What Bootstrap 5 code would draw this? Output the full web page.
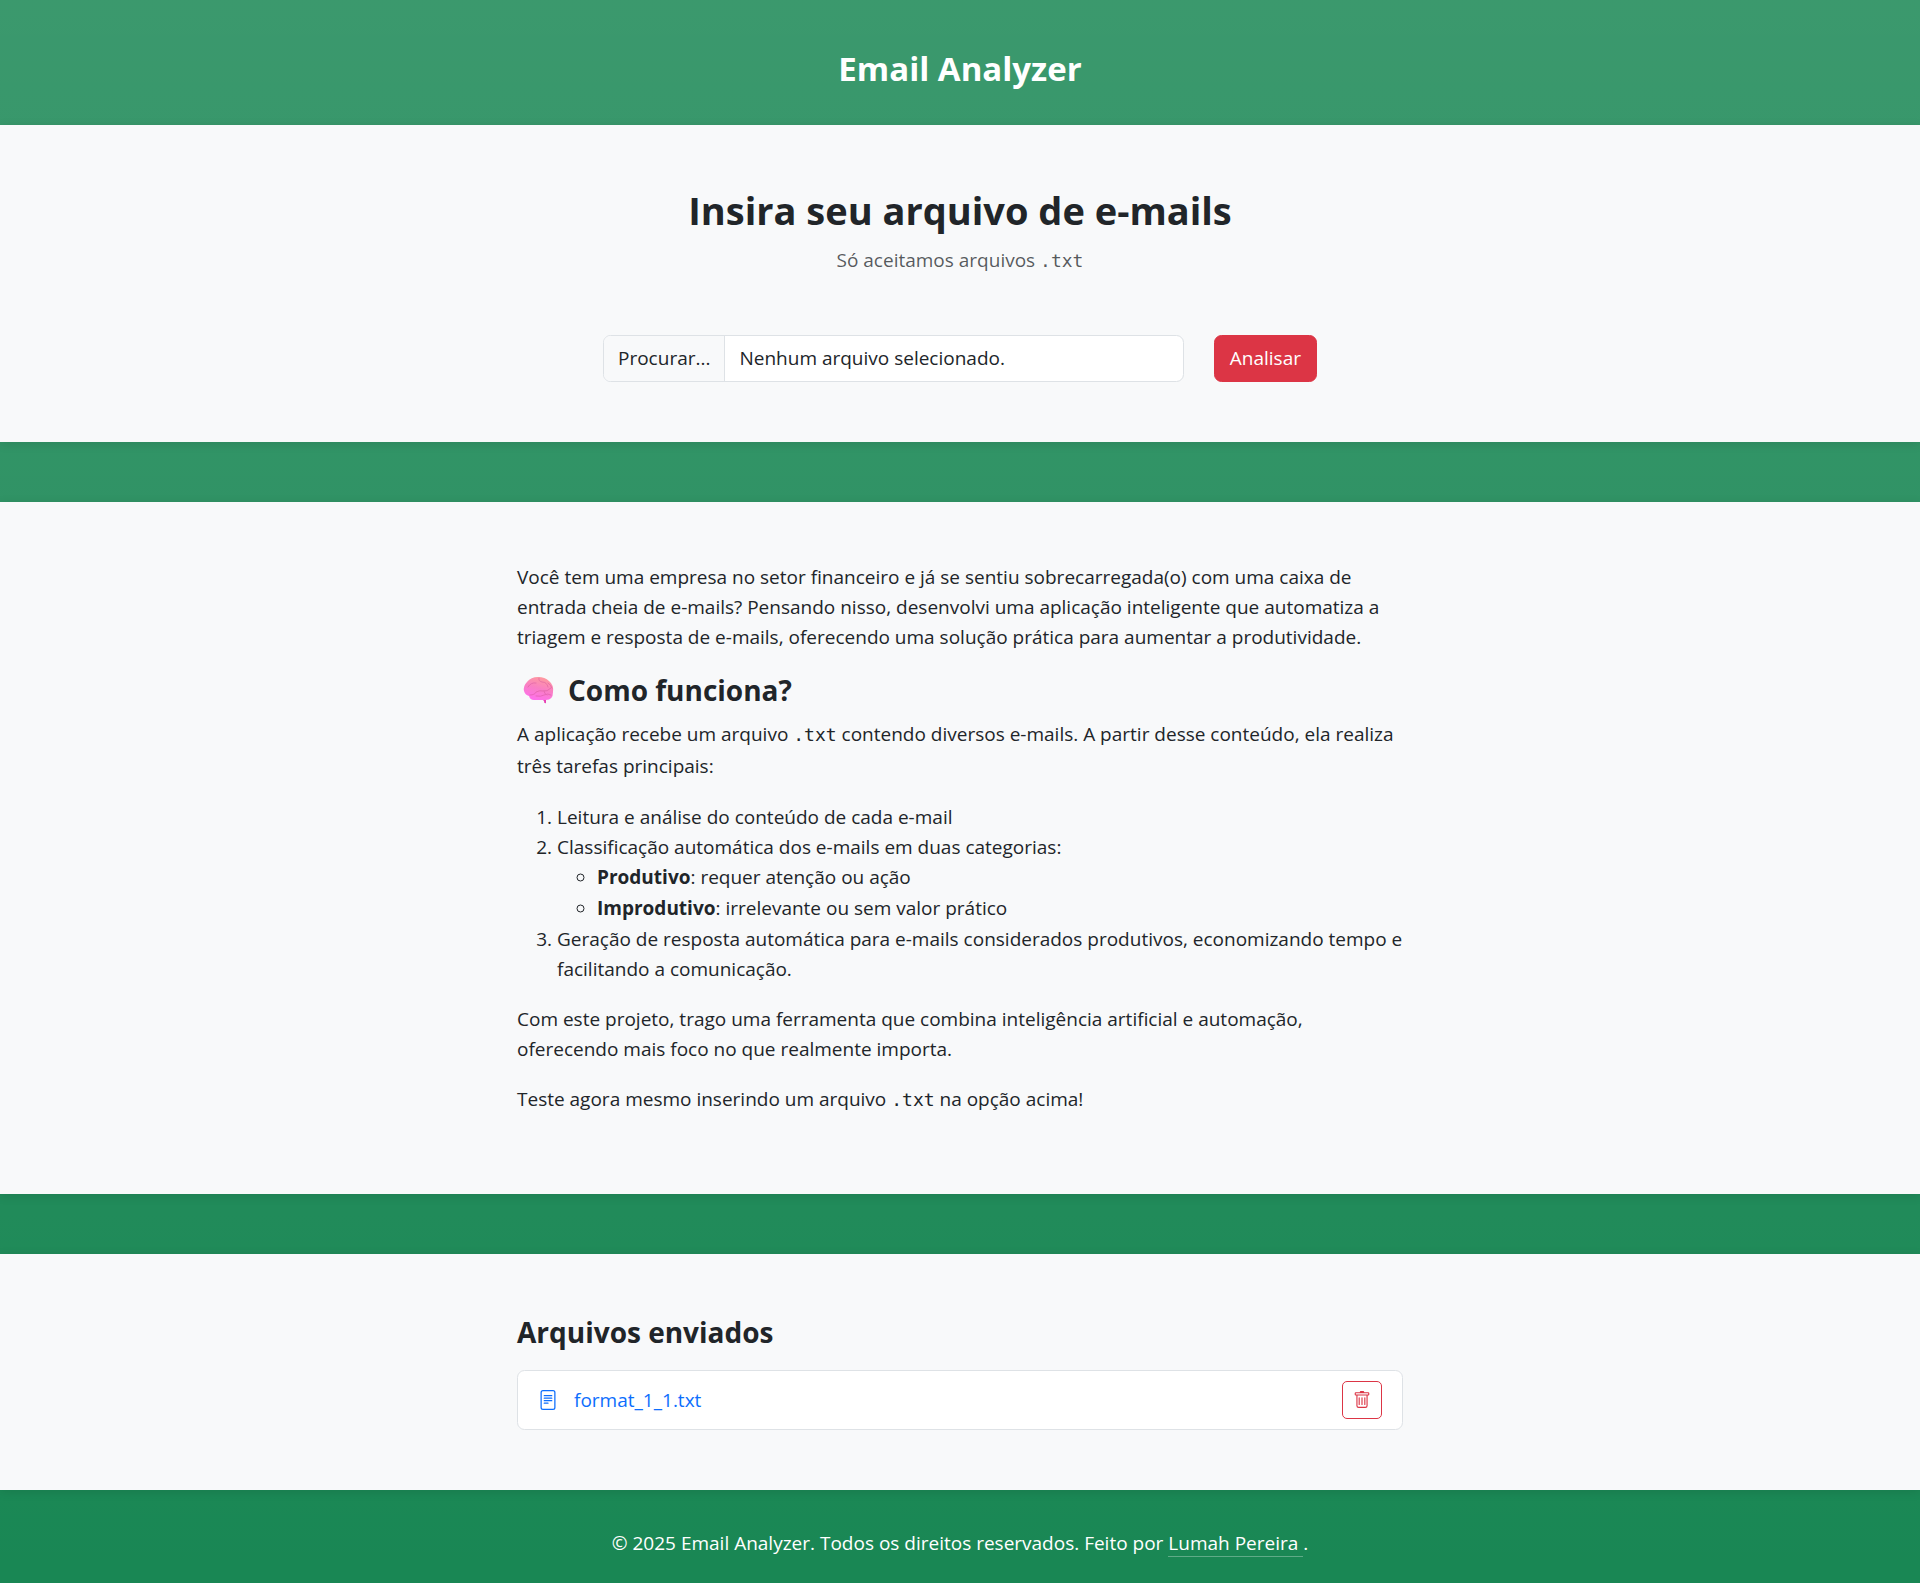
<!DOCTYPE html>
<html lang="pt-BR">
<head>
<meta charset="utf-8">
<meta name="viewport" content="width=device-width, initial-scale=1">
<title>Email Analyzer</title>
<link href="https://cdn.jsdelivr.net/npm/bootstrap@5.3.0/dist/css/bootstrap.min.css" rel="stylesheet">
<style>
  html { font-size: 20px; }
  body { font-family: "Open Sans", "Noto Sans", sans-serif; font-size: 19px; line-height: 30px; }
  h1, h2, h3 { font-weight: 700; line-height: 1.2; }
  code { font-family: "DejaVu Sans Mono", monospace; font-size: 18px; line-height: 1; color: inherit; }
  .site-title { font-size: 33px; line-height: 44px; }
  .site-header { padding: 47px 16px 34px; }
  .site-footer { padding: 38px 16px 25px; }
  .panel { padding: 60px 16px; box-shadow: 0 2px 10px rgba(0, 0, 0, .1); }
  .panel + .panel { margin-top: 60px; }
  .upload-title { font-size: 38px; line-height: 50px; }
  .section-title { font-size: 28px; line-height: 36px; }
  .content-column { max-width: 886px; }
  .upload-form { max-width: 714px; gap: 30px; }
  .upload-form .btn, .file-picker { font-size: 19px; line-height: 31px; }
  .upload-form .btn { padding: 7px 15px; }
  .file-picker { cursor: pointer; }
  .file-picker span { padding: 7px 14px; }
  .file-picker .file-picker-button { border-right: 1px solid #dee2e6; background: #f8f9fa; }
  .line-loose { line-height: 31px; }
  .line-code { line-height: 32px; }
  .file-item { min-height: 60px; }
  .file-item a { gap: 16px; }
  .file-item .btn { width: 40px; height: 38px; border-radius: 5px; }
  .author-link { border-bottom: 1px solid rgba(255, 255, 255, .3); }
</style>
<script src="https://cdn.jsdelivr.net/npm/bootstrap@5.3.0/dist/js/bootstrap.bundle.min.js"></script>
</head>
<body class="bg-success bg-gradient min-vh-100">
<header class="site-header text-center text-white">
  <h1 class="site-title mb-0">Email Analyzer</h1>
</header>

<main>
  <section class="panel bg-light">
    <div class="text-center mb-5">
      <h2 class="upload-title mb-2">Insira seu arquivo de e-mails</h2>
      <p class="text-muted mb-0">Só aceitamos arquivos <code>.txt</code></p>
    </div>
    <form class="upload-form d-flex mx-auto">
      <input class="visually-hidden" type="file" id="arquivo" accept=".txt">
      <label class="file-picker form-control d-flex p-0 overflow-hidden" for="arquivo">
        <span class="file-picker-button">Procurar...</span>
        <span>Nenhum arquivo selecionado.</span>
      </label>
      <button class="btn btn-danger" type="submit">Analisar</button>
    </form>
  </section>

  <section class="panel bg-light">
    <div class="content-column mx-auto">
      <p>Você tem uma empresa no setor financeiro e já se sentiu sobrecarregada(o) com uma caixa de entrada cheia de e-mails? Pensando nisso, desenvolvi uma aplicação inteligente que automatiza a triagem e resposta de e-mails, oferecendo uma solução prática para aumentar a produtividade.</p>
      <h3 class="section-title d-flex align-items-center mb-2">
        <svg class="ms-1 me-2" width="36" height="30" viewBox="0 0 36 30" aria-hidden="true">
          <defs>
            <linearGradient id="brain" x1=".7" y1="0" x2=".35" y2="1">
              <stop offset="0" stop-color="#ff9c9c"/>
              <stop offset=".5" stop-color="#f97fc4"/>
              <stop offset="1" stop-color="#ff70ee"/>
            </linearGradient>
          </defs>
          <path fill="#e83fb4" d="M20 24h4v4q-2 1-2-2z"/>
          <path fill="url(#brain)" d="M2 16Q1 11 5 7q4-5 11-5 7 0 11 4 5 4 4 11 0 8-7 8H12q-4 0-5-4-4-1-5-5z"/>
          <g fill="none" stroke="#d95ba0" stroke-width="1" stroke-linecap="round" opacity=".55">
            <path d="M6 12q3-5 8-4M17 3q-1 3 3 4 5 0 6 5"/>
            <path d="M8 20q5 0 6-3 4-2 7-1 4 1 8-3M14 21q5 1 8-1 4-2 7 0"/>
            <path d="M22 16q0 3 3 4M26 8q3 2 4 5"/>
          </g>
        </svg>
        Como funciona?
      </h3>
      <p class="line-code">A aplicação recebe um arquivo <code>.txt</code> contendo diversos e-mails. A partir desse conteúdo, ela realiza três tarefas principais:</p>
      <ol>
        <li>Leitura e análise do conteúdo de cada e-mail</li>
        <li>Classificação automática dos e-mails em duas categorias:
          <ul>
            <li class="line-loose"><strong>Produtivo</strong>: requer atenção ou ação</li>
            <li class="line-loose"><strong>Improdutivo</strong>: irrelevante ou sem valor prático</li>
          </ul>
        </li>
        <li>Geração de resposta automática para e-mails considerados produtivos, economizando tempo e facilitando a comunicação.</li>
      </ol>
      <p>Com este projeto, trago uma ferramenta que combina inteligência artificial e automação, oferecendo mais foco no que realmente importa.</p>
      <p>Teste agora mesmo inserindo um arquivo <code>.txt</code> na opção acima!</p>
    </div>
  </section>

  <section class="panel bg-light">
    <div class="content-column mx-auto">
      <h3 class="section-title mb-3">Arquivos enviados</h3>
      <ul class="list-group">
        <li class="file-item list-group-item d-flex justify-content-between align-items-center py-0">
          <a class="d-flex align-items-center text-decoration-none text-primary" href="#">
            <svg width="20" height="20" viewBox="0 0 16 16" fill="currentColor" aria-hidden="true">
              <path d="M5 4a.5.5 0 0 0 0 1h6a.5.5 0 0 0 0-1zm-.5 2.5A.5.5 0 0 1 5 6h6a.5.5 0 0 1 0 1H5a.5.5 0 0 1-.5-.5M5 8a.5.5 0 0 0 0 1h6a.5.5 0 0 0 0-1zm0 2a.5.5 0 0 0 0 1h3a.5.5 0 0 0 0-1z"/>
              <path d="M2 2a2 2 0 0 1 2-2h8a2 2 0 0 1 2 2v12a2 2 0 0 1-2 2H4a2 2 0 0 1-2-2zm2-1a1 1 0 0 0-1 1v12a1 1 0 0 0 1 1h8a1 1 0 0 0 1-1V2a1 1 0 0 0-1-1z"/>
            </svg>
            format_1_1.txt
          </a>
          <button class="btn btn-outline-danger d-flex align-items-center justify-content-center p-0" type="button" aria-label="Excluir">
            <svg width="18" height="18" viewBox="0 0 16 16" fill="currentColor" aria-hidden="true">
              <path d="M5.5 5.5A.5.5 0 0 1 6 6v6a.5.5 0 0 1-1 0V6a.5.5 0 0 1 .5-.5m2.5 0a.5.5 0 0 1 .5.5v6a.5.5 0 0 1-1 0V6a.5.5 0 0 1 .5-.5m3 .5a.5.5 0 0 0-1 0v6a.5.5 0 0 0 1 0z"/>
              <path d="M14.5 3a1 1 0 0 1-1 1H13v9a2 2 0 0 1-2 2H5a2 2 0 0 1-2-2V4h-.5a1 1 0 0 1-1-1V2a1 1 0 0 1 1-1H6a1 1 0 0 1 1-1h2a1 1 0 0 1 1 1h3.5a1 1 0 0 1 1 1zM4.118 4 4 4.059V13a1 1 0 0 0 1 1h6a1 1 0 0 0 1-1V4.059L11.882 4zM2.5 3h11V2h-11z"/>
            </svg>
          </button>
        </li>
      </ul>
    </div>
  </section>
</main>

<footer class="site-footer text-center text-white">
  <p class="mb-0">© 2025 Email Analyzer. Todos os direitos reservados. Feito por <a class="author-link text-white text-decoration-none" href="#">Lumah Pereira&nbsp;</a>.</p>
</footer>
</body>
</html>
